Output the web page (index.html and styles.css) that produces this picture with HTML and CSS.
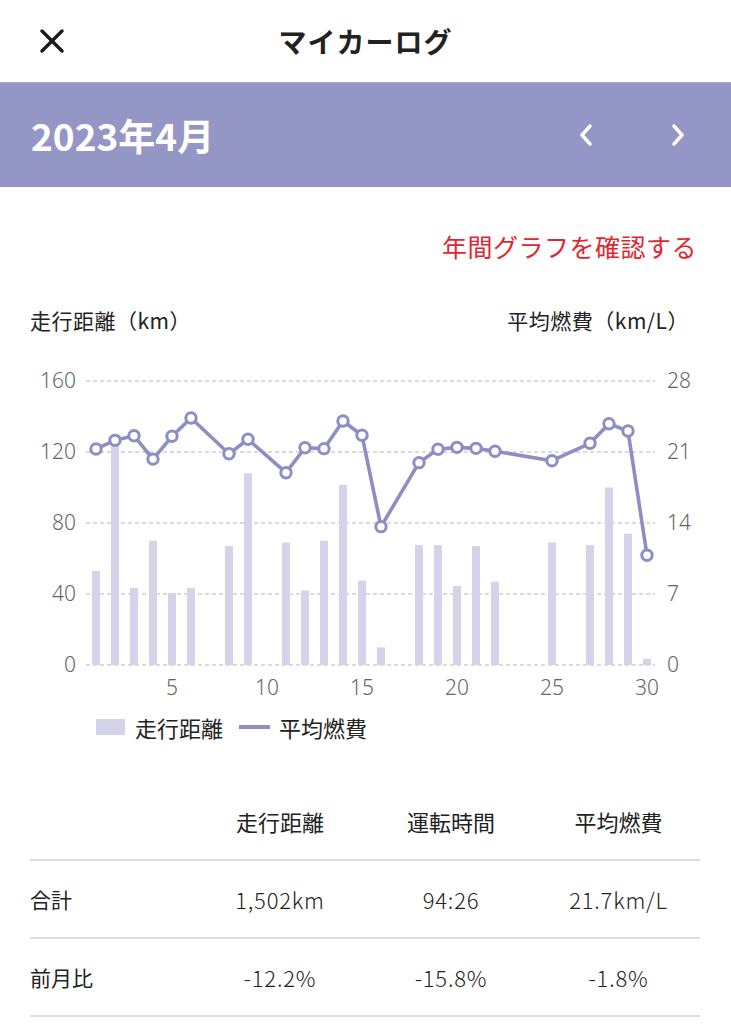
FILE: index.html
```html
<!DOCTYPE html>
<html lang="ja">
<head>
    <meta charset="UTF-8">
    <meta name="viewport" content="width=device-width, initial-scale=1.0">
    <title>マイカーログ</title>
    <link rel="stylesheet" href="styles.css">
</head>
<body>
    <header class="topbar">
        <button class="close-btn" aria-label="閉じる">
            <svg width="24" height="24" viewBox="0 0 24 24">
                <path d="M2 2 L22 22 M22 2 L2 22" stroke="#1c1c1e" stroke-width="3.4" stroke-linecap="round"/>
            </svg>
        </button>
        <h1>マイカーログ</h1>
        <span></span>
    </header>

    <div class="month-bar">
        <h2>2023年4月</h2>
        <div class="month-nav">
            <button aria-label="前月">
                <svg width="14" height="22" viewBox="0 0 14 22"><polyline points="11,2 3,11 11,20" fill="none" stroke="#fff" stroke-width="3.4" stroke-linecap="round" stroke-linejoin="round"/></svg>
            </button>
            <button aria-label="翌月">
                <svg width="14" height="22" viewBox="0 0 14 22"><polyline points="3,2 11,11 3,20" fill="none" stroke="#fff" stroke-width="3.4" stroke-linecap="round" stroke-linejoin="round"/></svg>
            </button>
        </div>
    </div>

    <main class="content">
        <div class="link-row">
            <a href="#" class="year-link">年間グラフを確認する</a>
        </div>

        <div class="axis-titles">
            <span>走行距離（km）</span>
            <span>平均燃費（km/L）</span>
        </div>

        <svg id="chart" class="chart" width="731" height="345" viewBox="0 0 731 345"></svg>

        <div class="legend">
            <span class="swatch-bar"></span>
            <span>走行距離</span>
            <span class="swatch-line"></span>
            <span>平均燃費</span>
        </div>

        <div class="summary">
            <div class="row head">
                <span></span>
                <span>走行距離</span>
                <span>運転時間</span>
                <span>平均燃費</span>
            </div>
            <div class="row">
                <span class="label">合計</span>
                <span class="num">1,502km</span>
                <span class="num">94:26</span>
                <span class="num">21.7km/L</span>
            </div>
            <div class="row">
                <span class="label">前月比</span>
                <span class="num">-12.2%</span>
                <span class="num">-15.8%</span>
                <span class="num">-1.8%</span>
            </div>
        </div>
    </main>

    <script>
        // daily distance (km) and average fuel economy (km/L), null = no drive
        const km = [53, 125, 43.5, 70, 40.5, 43.5, 0, 67, 108, 0, 69, 42, 70, 101.5, 47.5,
                    10, 0, 67.5, 67.5, 44.5, 67, 47, 0, 0, 69, 0, 67.5, 100, 74, 3.5];
        const fuel = [21.3, 22.15, 22.6, 20.3, 22.55, 24.35, null, 20.83, 22.25, null, 18.96, 21.42, 21.33, 24.06, 22.65,
                      13.64, null, 19.95, 21.27, 21.46, 21.36, 21.07, null, null, 20.14, null, 21.86, 23.79, 23.07, 10.82];

        (function drawChart() {
            const NS = 'http://www.w3.org/2000/svg';
            const svg = document.getElementById('chart');
            const plotTop = 21, plotBottom = 305, plotLeft = 86, plotRight = 655;
            const plotH = plotBottom - plotTop;

            const xOf = d => 96 + (d - 1) * 19;
            const yKm = v => plotBottom - v * plotH / 160;
            const yFuel = v => plotBottom - v * plotH / 28;

            function add(tag, attrs, text) {
                const node = document.createElementNS(NS, tag);
                for (const k in attrs) node.setAttribute(k, attrs[k]);
                if (text !== undefined) node.textContent = text;
                svg.appendChild(node);
                return node;
            }

            // grid + axis labels
            for (let i = 0; i <= 4; i++) {
                const y = plotTop + plotH * i / 4;
                add('line', { x1: plotLeft, x2: plotRight, y1: y, y2: y, class: 'grid' });
                add('text', { x: 76, y: y + 7, 'text-anchor': 'end', class: 'tick' }, 160 - i * 40);
                add('text', { x: 667, y: y + 7, class: 'tick' }, 28 - i * 7);
            }
            [5, 10, 15, 20, 25, 30].forEach(d => {
                add('text', { x: xOf(d), y: 335, 'text-anchor': 'middle', class: 'tick' }, d);
            });

            // bars
            km.forEach((v, i) => {
                if (!v) return;
                add('rect', { x: xOf(i + 1) - 4, y: yKm(v), width: 8, height: plotBottom - yKm(v), class: 'bar' });
            });

            // fuel line
            const pts = [];
            fuel.forEach((v, i) => { if (v !== null) pts.push([xOf(i + 1), yFuel(v)]); });
            add('polyline', { points: pts.map(p => p.join(',')).join(' '), class: 'line' });
            pts.forEach(p => add('circle', { cx: p[0], cy: p[1], r: 5.2, class: 'dot' }));
        })();
    </script>
</body>
</html>
```

FILE: styles.css
```css
:root {
    --text: #222;
    --muted: #666;
    --band: #9496c5;
    --line: #8d8ec4;
    --bar: #d5d3e9;
    --accent: #e3252d;
    --border: #dcdcdc;
}

body {
    margin: 0;
    background: #fff;
    color: var(--text);
    font-family: "Noto Sans CJK JP", "Noto Sans", sans-serif;
}

button {
    background: none;
    border: none;
    padding: 0;
    cursor: pointer;
    display: flex;
    align-items: center;
    justify-content: center;
}

.topbar {
    height: 82px;
    display: grid;
    grid-template-columns: 1fr auto 1fr;
    align-items: center;
    padding: 0 30px;
}

.close-btn {
    width: 44px;
    height: 44px;
}

.topbar h1 {
    margin: 0;
    font-size: 28px;
    font-weight: 700;
    letter-spacing: 1px;
}

.month-bar {
    height: 105px;
    background: var(--band);
    border-top: 1px solid #a9abd0;
    box-sizing: border-box;
    display: flex;
    align-items: center;
    justify-content: space-between;
    padding: 0 30px 0 31px;
    color: #fff;
}

.month-bar h2 {
    margin: 0;
    font-size: 37px;
    font-weight: 700;
    letter-spacing: 0;
}

.month-nav {
    display: flex;
    gap: 46px;
}

.month-nav button {
    width: 46px;
    height: 46px;
}

.content {
    padding-top: 44px;
}

.link-row {
    display: flex;
    justify-content: flex-end;
    padding-right: 34px;
    line-height: 30px;
}

.year-link {
    color: var(--accent);
    text-decoration: none;
    font-size: 25px;
    letter-spacing: 0.5px;
}

.axis-titles {
    display: flex;
    justify-content: space-between;
    margin-top: 44px;
    padding: 0 42px 0 30px;
    font-size: 21px;
    line-height: 30px;
    letter-spacing: 0.5px;
}

.chart {
    display: block;
    margin-top: 25px;
}

.chart .grid {
    stroke: #cfcfcf;
    stroke-width: 1.3;
    stroke-dasharray: 4 3;
}

.chart .tick {
    font-family: "Noto Sans", sans-serif;
    font-size: 21px;
    font-weight: 300;
    fill: var(--muted);
}

.chart .bar {
    fill: var(--bar);
}

.chart .line {
    fill: none;
    stroke: var(--line);
    stroke-width: 3.6;
    stroke-linejoin: round;
}

.chart .dot {
    fill: #fff;
    stroke: var(--line);
    stroke-width: 3;
}

.legend {
    display: flex;
    align-items: center;
    padding-left: 96px;
    margin-top: 7px;
    font-size: 22px;
    line-height: 30px;
}

.swatch-bar {
    width: 29px;
    height: 16px;
    background: var(--bar);
    margin-right: 10px;
}

.swatch-line {
    width: 31px;
    height: 4px;
    background: var(--line);
    margin: 0 9px 0 16px;
}

.summary {
    margin: 41px 31px 0 30px;
}

.row {
    display: grid;
    grid-template-columns: 165px 170px 172px 1fr;
    align-items: center;
    height: 76px;
    border-bottom: 2px solid var(--border);
    font-size: 22px;
}

.row span {
    text-align: center;
}

.row .label {
    text-align: left;
    font-size: 21px;
}

.row .num {
    font-weight: 300;
    letter-spacing: 0.8px;
}
```
